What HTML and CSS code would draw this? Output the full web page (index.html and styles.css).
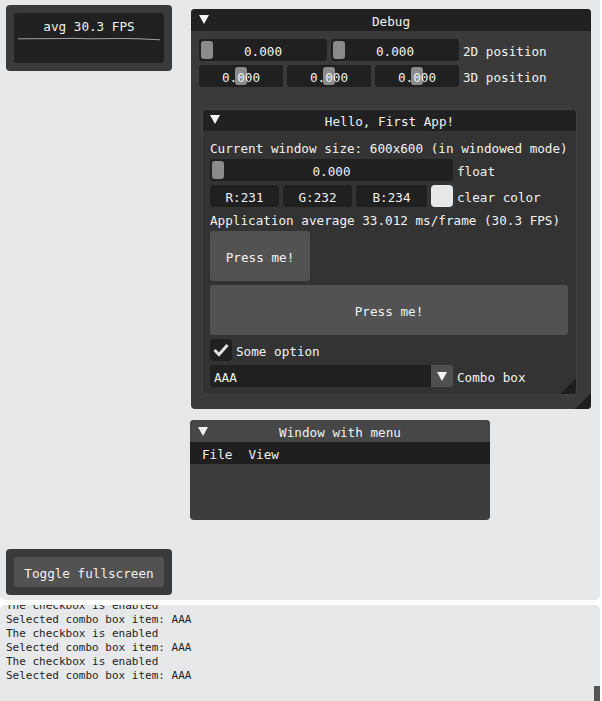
FILE: index.html
```html
<!DOCTYPE html>
<html>
<head>
<meta charset="utf-8">
<link rel="stylesheet" href="styles.css">
</head>
<body>
<div class="canvas">
  <div class="win fps">
    <div class="plot">
      <div class="plot-label">avg 30.3 FPS</div>
      <svg class="plot-line" width="150" height="50" viewBox="0 0 150 50">
        <polyline points="4,25.8 40,25.6 60,25.4 75,25.8 110,25.5 125,25.8 146,26.8" fill="none" stroke="#a0a0a0" stroke-width="1"/>
      </svg>
    </div>
  </div>

  <div class="win debug">
    <div class="titlebar dark"><span class="tri"></span><span class="title">Debug</span></div>
    <div class="body">
      <div class="row">
        <div class="frame w128"><span class="grab at-left"></span><span class="val">0.000</span></div>
        <div class="frame w128"><span class="grab at-left"></span><span class="val">0.000</span></div>
        <span class="label">2D position</span>
      </div>
      <div class="row">
        <div class="frame w84"><span class="grab at-mid"></span><span class="val">0.000</span></div>
        <div class="frame w84"><span class="grab at-mid"></span><span class="val">0.000</span></div>
        <div class="frame w84"><span class="grab at-mid"></span><span class="val">0.000</span></div>
        <span class="label">3D position</span>
      </div>

      <div class="child">
        <div class="titlebar dark"><span class="tri"></span><span class="title">Hello, First App!</span></div>
        <div class="body child-body">
          <div class="text">Current window size: 600x600 (in windowed mode)</div>
          <div class="row">
            <div class="frame w243"><span class="grab at-left"></span><span class="val">0.000</span></div>
            <span class="label">float</span>
          </div>
          <div class="row">
            <div class="frame w69"><span class="val">R:231</span></div>
            <div class="frame w69"><span class="val">G:232</span></div>
            <div class="frame w71"><span class="val">B:234</span></div>
            <div class="swatch"></div>
            <span class="label">clear color</span>
          </div>
          <div class="text">Application average 33.012 ms/frame (30.3 FPS)</div>
          <div class="btn small">Press me!</div>
          <div class="btn wide">Press me!</div>
          <div class="row">
            <div class="checkbox">
              <svg width="22" height="22" viewBox="0 0 22 22"><polyline points="4.5,11 9,15.5 17.5,6" fill="none" stroke="#e0e0e0" stroke-width="3" stroke-linejoin="miter" stroke-linecap="butt"/></svg>
            </div>
            <span class="label">Some option</span>
          </div>
          <div class="row">
            <div class="combo">
              <span class="combo-val">AAA</span>
              <span class="combo-arrow"><span class="down"></span></span>
            </div>
            <span class="label">Combo box</span>
          </div>
        </div>
        <div class="grip"></div>
      </div>
    </div>
    <div class="grip big"></div>
  </div>

  <div class="win menuwin">
    <div class="titlebar light"><span class="tri"></span><span class="title">Window with menu</span></div>
    <div class="menubar"><span>File</span><span>View</span></div>
  </div>

  <div class="win toggle">
    <div class="btn tbtn">Toggle fullscreen</div>
  </div>
</div>

<div class="console">
  <div class="log">
    <div>The checkbox is enabled</div>
    <div>Selected combo box item: AAA</div>
    <div>The checkbox is enabled</div>
    <div>Selected combo box item: AAA</div>
    <div>The checkbox is enabled</div>
    <div>Selected combo box item: AAA</div>
  </div>
  <div class="thumb"></div>
</div>
</body>
</html>
```

FILE: styles.css
```css
html, body {
  margin: 0;
  padding: 0;
  background: #ffffff;
}
body {
  width: 602px;
  height: 701px;
  overflow: hidden;
  font-family: "DejaVu Sans Mono", monospace;
  font-size: 12.65px;
  color: #f2f2f2;
}
.canvas {
  position: relative;
  width: 600px;
  height: 600px;
  background: #e7e8ea;
  border-radius: 0 0 5px 5px;
}
.win {
  position: absolute;
  box-sizing: border-box;
  background: #3a3a3a;
  border-radius: 4px;
  overflow: hidden;
}
.fps {
  left: 6px;
  top: 5px;
  width: 166px;
  height: 66px;
  padding: 8px;
}
.plot {
  position: relative;
  width: 150px;
  height: 50px;
  background: #202020;
  border-radius: 3px;
}
.plot-label {
  text-align: center;
  line-height: 16px;
  padding-top: 6px;
}
.plot-line {
  position: absolute;
  left: 0;
  top: 0;
}
.debug {
  left: 191px;
  top: 9px;
  width: 400px;
  height: 400px;
  background: #3a3a3a;
}
.titlebar {
  position: relative;
  height: 22px;
  display: flex;
  align-items: center;
  justify-content: center;
}
.titlebar.dark { background: #212121; }
.titlebar.light { background: #474747; }
.tri {
  position: absolute;
  left: 8px;
  top: 6px;
  width: 0;
  height: 0;
  border-left: 5.5px solid transparent;
  border-right: 5.5px solid transparent;
  border-top: 9px solid #f4f4f4;
}
.title {
  line-height: 16px;
  padding-top: 4px;
}
.body {
  padding: 8px;
  display: flex;
  flex-direction: column;
  gap: 4px;
  align-items: flex-start;
}
.row {
  display: flex;
  align-items: center;
  gap: 4px;
  height: 22px;
}
.frame {
  position: relative;
  height: 22px;
  background: #202020;
  border-radius: 3px;
  display: flex;
  align-items: center;
  justify-content: center;
  box-sizing: border-box;
}
.w128 { width: 128px; }
.w84 { width: 84px; }
.w243 { width: 243px; }
.w69 { width: 69px; }
.w71 { width: 71px; }
.val {
  position: relative;
  line-height: 16px;
  padding-top: 4px;
  z-index: 1;
}
.grab {
  position: absolute;
  top: 2px;
  width: 12px;
  height: 18px;
  background: #8b8b8b;
  border-radius: 3px;
}
.grab.at-left { left: 2px; }
.grab.at-mid { left: 36px; }
.label {
  line-height: 16px;
  padding-top: 4px;
  white-space: nowrap;
}
.child {
  position: relative;
  margin-top: 18px;
  margin-left: 3px;
  width: 375px;
  height: 286px;
  box-sizing: border-box;
  background: #333333;
  border: 1px solid #444444;
  border-radius: 4px;
  overflow: hidden;
}
.child .titlebar {
  margin: -1px -1px 0 -1px;
  height: 22px;
}
.child-body {
  padding: 8px 7px;
}
.text {
  box-sizing: border-box;
  height: 16px;
  line-height: 16px;
  padding-top: 2px;
  white-space: nowrap;
}
.swatch {
  width: 22px;
  height: 22px;
  border-radius: 4px;
  background: #e7e8ea;
}
.btn {
  box-sizing: border-box;
  background: #525252;
  border-radius: 3px;
  display: flex;
  align-items: center;
  justify-content: center;
  line-height: 16px;
  padding-top: 4px;
}
.btn.small { width: 100px; height: 50px; }
.btn.wide { width: 358px; height: 50px; }
.checkbox {
  width: 22px;
  height: 22px;
  background: #202020;
  border-radius: 3px;
}
.checkbox svg { display: block; }
.combo {
  width: 243px;
  height: 22px;
  display: flex;
  background: #202020;
  border-radius: 3px;
  overflow: hidden;
}
.combo-val {
  flex: 1;
  line-height: 18px;
  padding-top: 4px;
  padding-left: 4px;
}
.combo-arrow {
  width: 22px;
  height: 22px;
  background: #505050;
  display: flex;
  align-items: center;
  justify-content: center;
}
.down {
  width: 0;
  height: 0;
  border-left: 5.5px solid transparent;
  border-right: 5.5px solid transparent;
  border-top: 9px solid #f4f4f4;
}
.grip {
  position: absolute;
  right: 0;
  bottom: 0;
  width: 16px;
  height: 16px;
  background: #1e1e1e;
  clip-path: polygon(100% 0, 100% 100%, 0 100%);
}
.menuwin {
  left: 190px;
  top: 420px;
  width: 300px;
  height: 100px;
  background: #3d3d3d;
}
.menuwin .tri { left: 8px; top: 7px; }
.menubar {
  height: 22px;
  background: #1f1f1f;
  display: flex;
  align-items: center;
  gap: 16px;
  padding-left: 12px;
  line-height: 16px;
}
.menubar span {
  padding-top: 4px;
}
.toggle {
  left: 6px;
  top: 549px;
  width: 166px;
  height: 46px;
  padding: 8px;
}
.tbtn {
  width: 150px;
  height: 30px;
}
.console {
  position: relative;
  margin-top: 5px;
  width: 600px;
  height: 96px;
  background: #e7e8ea;
  border-radius: 5px 5px 0 0;
  overflow: hidden;
}
.log {
  margin-top: -6px;
  padding-left: 6px;
  font-size: 11px;
  line-height: 14px;
  color: #1e1e1e;
}
.thumb {
  position: absolute;
  right: 0;
  bottom: 0;
  width: 6px;
  height: 15px;
  background: #555555;
}
```
